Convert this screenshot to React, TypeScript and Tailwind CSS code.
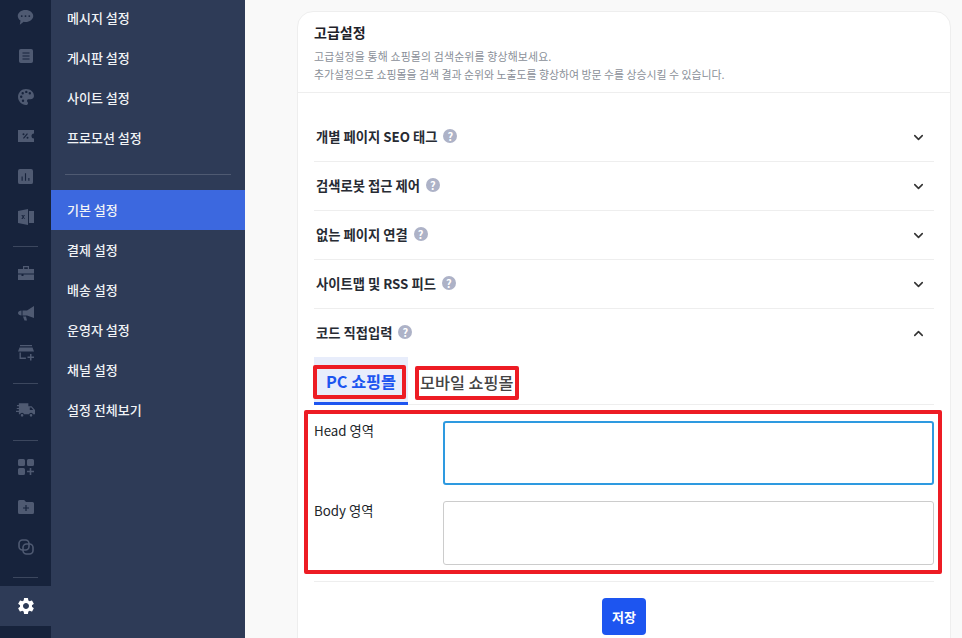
import { ChevronDown, ChevronUp } from 'lucide-react';
import { MdSettings } from 'react-icons/md';

const railGroups = [
  [
    <svg key="chat" viewBox="0 0 18 18" className="w-[17px] h-[17px] translate-y-px" fill="currentColor"><path d="M9 1C4.4 1 .8 3.8.8 7.4c0 2 1.1 3.7 2.9 4.9L3 16.600l4.100-3c.6.1 1.300.2 1.900.2 4.600 0 8.200-2.900 8.200-6.400S13.600 1 9 1zM5 8.500a1 1 0 110-2 1 1 0 010 2zm4 0a1 1 0 110-2 1 1 0 010 2zm4 0a1 1 0 110-2 1 1 0 010 2z" fillRule="evenodd" /></svg>,
    <svg key="doc" viewBox="0 0 16 16" className="w-[14px] h-4" fill="currentColor"><path fillRule="evenodd" d="M2 0h12a2 2 0 012 2v12a2 2 0 01-2 2H2a2 2 0 01-2-2V2a2 2 0 012-2zm2 4v1.200h8V4H4zm0 3.400v1.200h8V7.400H4zm0 3.400V12h8v-1.200H4z" /></svg>,
    <svg key="palette" viewBox="0 0 16 16" className="w-4 h-4 translate-y-px" fill="currentColor"><path fillRule="evenodd" d="M8 0C3.600 0 0 3.400 0 7.800 0 12.300 3.600 16 8 16c1.300 0 2-.8 2-1.800 0-.5-.2-.9-.5-1.300-.3-.4-.5-.7-.5-1.200 0-.9.7-1.500 1.600-1.500h1.900c2.100 0 3.500-1.400 3.500-3.300C16 2.800 12.400 0 8 0zM3.200 9a1.200 1.200 0 110-2.400 1.200 1.200 0 010 2.400zm1.500-3.600a1.200 1.200 0 110-2.400 1.200 1.200 0 010 2.400zm3.600-1.300a1.200 1.200 0 110-2.400 1.200 1.200 0 010 2.400zm3.500 1.300a1.200 1.200 0 110-2.400 1.200 1.200 0 010 2.400zM5 13a1.200 1.200 0 110-2.400A1.200 1.200 0 015 13z" /></svg>,
    <svg key="coupon" viewBox="0 0 16 12" className="w-4 h-3" fill="currentColor"><path fillRule="evenodd" d="M0 0h16v3.500a2.500 2.500 0 000 5V12H0V0zm9 3.300L5 8l.9.700 4-4.700L9 3.300zM5.500 5.300a1 1 0 100-2 1 1 0 000 2zm4 3.400a1 1 0 100-2 1 1 0 000 2z" /></svg>,
    <svg key="chart" viewBox="0 0 16 16" className="w-[15px] h-[15px]" fill="currentColor"><path fillRule="evenodd" d="M2 0h12a2 2 0 012 2v12a2 2 0 01-2 2H2a2 2 0 01-2-2V2a2 2 0 012-2zm1.800 8v4.500H5V8H3.800zm3.600-3.500v8h1.200v-8H7.400zM11 9.500v3h1.200v-3H11z" /></svg>,
    <svg key="excel" viewBox="0 0 16 16" className="w-4 h-4 translate-y-px" fill="currentColor"><path fillRule="evenodd" d="M0 2l10-2v16L0 14V2zm3.300 4l1.400 2-1.400 2h1.300l.8-1.200.8 1.200H7L5.600 8 7 6H5.800l-.7 1.100L4.500 6H3.300zM11 2h5v12h-5V2z" /></svg>,
  ],
  [
    <svg key="bag" viewBox="0 0 16 14" className="w-4 h-[14px]" fill="currentColor"><path fillRule="evenodd" d="M5 0h6v3h5v4.500H0V3h5V0zm1.200 1.200V3h3.600V1.200H6.200zM0 8.500h3.500V10h2V8.500H16V14H0V8.500z" /></svg>,
    <svg key="megaphone" viewBox="0 0 16 16" className="w-4 h-4" fill="currentColor"><path d="M16 1v12L9 10.500H4.500V5.500H9L16 1zM3.500 5.500v5C1.500 10.500 0 9.500 0 8s1.500-2.500 3.500-2.500zM5 11.500h3L9 15.500H6.500L5 11.500z" /></svg>,
    <svg key="store" viewBox="0 0 16 16" className="w-4 h-4" fill="currentColor"><path fillRule="evenodd" d="M2 0h12v1.200H2V0zM1.500 2.400h13L16 6.500H0l1.500-4.100zM1.500 7.500h1.400v5h5v1.500H1.500V7.500zM12 9h1.500v2.500H16V13h-2.500v2.500H12V13H9.500v-1.500H12V9z" /></svg>,
  ],
  [
    <svg key="truck" viewBox="0 0 20 14" className="w-[19px] h-[14px]" fill="currentColor"><path fillRule="evenodd" d="M3 0h10v3h3.500L20 7v4.500h-2a2.200 2.200 0 00-4.300 0H8.500a2.200 2.200 0 00-4.300 0H3V9H0V7.800h3V6H.8V4.800H3V3H1V1.800h2V0zm11.500 4.400V7h3.600l-2-2.600h-1.600zM6.400 14a1.400 1.400 0 110-2.800 1.400 1.400 0 010 2.800zm9.400 0a1.400 1.400 0 110-2.800 1.400 1.400 0 010 2.800z" /></svg>,
  ],
  [
    <svg key="apps" viewBox="0 0 16 16" className="w-4 h-4" fill="currentColor"><path d="M1.500 0h4A1.500 1.500 0 017 1.500v4A1.500 1.500 0 015.500 7h-4A1.500 1.500 0 010 5.500v-4A1.500 1.500 0 011.500 0zm9 0h4A1.500 1.500 0 0116 1.500v4A1.500 1.500 0 0114.500 7h-4A1.500 1.500 0 019 5.500v-4A1.500 1.500 0 0110.500 0zm-9 9h4A1.500 1.500 0 017 10.500v4A1.500 1.500 0 015.500 16h-4A1.500 1.500 0 010 14.500v-4A1.500 1.500 0 011.500 9zM11.700 9h1.600v2.700H16v1.600h-2.700V16h-1.600v-2.700H9v-1.600h2.700V9z" /></svg>,
    <svg key="folder" viewBox="0 0 16 14" className="w-4 h-[14px]" fill="currentColor"><path fillRule="evenodd" d="M1.500 0h4.700L8 2h6.500A1.500 1.500 0 0116 3.500v9a1.500 1.500 0 01-1.500 1.500h-13A1.500 1.500 0 010 12.500v-11A1.500 1.500 0 011.500 0zm5.900 5v2.400H5v1.200h2.400V11h1.200V8.600H11V7.400H8.600V5H7.400z" /></svg>,
    <svg key="copy" viewBox="0 0 16 16" className="w-4 h-4" fill="none" stroke="currentColor" strokeWidth="1.600"><rect x="1" y="1" width="10" height="10" rx="3.500" /><rect x="5" y="5" width="10" height="10" rx="3.500" /></svg>,
  ],
];

const topMenu = ['메시지 설정', '게시판 설정', '사이트 설정', '프로모션 설정'];
const bottomMenu = ['기본 설정', '결제 설정', '배송 설정', '운영자 설정', '채널 설정', '설정 전체보기'];
const accordions = ['개별 페이지 SEO 태그', '검색로봇 접근 제어', '없는 페이지 연결', '사이트맵 및 RSS 피드'];

function Help() {
  return (
    <span className="ml-[6px] -translate-y-px w-[14px] h-[14px] rounded-full bg-[#adb2c7] text-white text-[11px] font-bold leading-[14px] text-center inline-block">?</span>
  );
}

export default function App() {
  return (
    <div className="h-[638px] w-[962px] overflow-hidden flex bg-[#f9f9f9] text-[#212529]" style={{ fontFamily: '"Noto Sans CJK KR", "Noto Sans", sans-serif' }}>
      {/* Icon rail */}
      <aside className="w-[51px] shrink-0 bg-[#17233c] flex flex-col text-[#4f5a72]">
        <div className="-mt-[4px]">
          {railGroups.map((group, i) => (
            <div key={i}>
              {group.map((icon, j) => (
                <div key={j} className="h-[40px] flex items-center justify-center">{icon}</div>
              ))}
              <div className={`mx-[13px] mt-[10px] h-px bg-[#3c475e] ${i < railGroups.length - 1 ? 'mb-[6px]' : ''}`} />
            </div>
          ))}
          <div className="mt-[8px] h-[40px] bg-[#2e3b57] flex items-center justify-center text-white">
            <MdSettings size={20} />
          </div>
        </div>
      </aside>

      {/* Settings menu */}
      <nav className="w-[194px] shrink-0 bg-[#2e3b57] text-[#f1f3f6] text-[13px] font-medium">
        <div className="-mt-[2px]">
          {topMenu.map((label) => (
            <div key={label} className="h-[40px] pl-[16px] flex items-center">{label}</div>
          ))}
        </div>
        <div className="mx-[14px] mt-[16px] mb-[15px] h-px bg-[#4f5a72]" />
        {bottomMenu.map((label, i) => (
          <div key={label} className={`h-[40px] pl-[16px] flex items-center ${i === 0 ? 'bg-[#3c68df]' : ''}`}>{label}</div>
        ))}
      </nav>

      {/* Content */}
      <main className="flex-1 pl-[52px] pr-[11px] pt-[11px]">
        <section className="relative bg-white border border-[#eeeeee] rounded-[16px] h-[700px]">
          <header className="h-[81px] border-b border-[#eeeeee] pl-[16px] pt-[10px]">
            <h2 className="text-[14px] font-bold leading-[20px] text-[#1e2229]">고급설정</h2>
            <p className="mt-[5px] text-[10.900px] leading-[18px] text-[#8a8f98]">
              <span className="tracking-[0.16px]">고급설정을 통해 쇼핑몰의 검색순위를 향상해보세요.</span>
              <br />
              추가설정으로 쇼핑몰을 검색 결과 순위와 노출도를 향상하여 방문 수를 상승시킬 수 있습니다.
            </p>
          </header>

          <div className="px-[16px] pt-[20px]">
            {accordions.map((label) => (
              <div key={label} className="h-[49px] border-b border-[#eeeeee] flex items-center justify-between pl-[2px] pr-[8px]">
                <span className="flex items-center text-[13.300px] font-bold text-[#272b33]">{label}<Help /></span>
                <ChevronDown size={15} strokeWidth={2.500} className="text-[#333]" />
              </div>
            ))}
            <div className="h-[48px] flex items-center justify-between pl-[2px] pr-[8px]">
              <span className="flex items-center text-[13.300px] font-bold text-[#272b33]">코드 직접입력<Help /></span>
              <ChevronUp size={15} strokeWidth={2.500} className="text-[#333]" />
            </div>

            {/* Tabs */}
            <div className="flex border-b border-[#eeeeee] h-[48px]">
              <div className="w-[94px] h-[48px] pt-[3px] bg-[#e8edfb] border-b-[3px] border-[#1d55f0] text-[#1d55f0] text-[16.300px] font-bold flex items-center justify-center">PC 쇼핑몰</div>
              <div className="ml-[12px] h-[48px] pt-[2px] text-[16.300px] font-medium text-[#444] flex items-center">모바일 쇼핑몰</div>
            </div>

            {/* Code fields */}
            <div className="pt-[16px] pb-[16px] border-b border-[#eeeeee]">
              <div className="flex h-[64px]">
                <label className="w-[129px] text-[13.300px] pt-[1px] leading-[18px]">Head 영역</label>
                <textarea className="flex-1 resize-none rounded-[3px] border-2 border-[#2e9ae0] bg-white outline-none" />
              </div>
              <div className="flex h-[64px] mt-[16px]">
                <label className="w-[129px] text-[13.300px] pt-[1px] leading-[18px]">Body 영역</label>
                <textarea className="flex-1 resize-none rounded-[3px] border border-[#cccccc] bg-white outline-none" />
              </div>
            </div>

            <div className="flex justify-center pt-[16px]">
              <button className="w-[44px] h-[37px] rounded-[4px] bg-[#1d55f0] text-white text-[13px] font-bold">저장</button>
            </div>
          </div>

          {/* Red annotation boxes */}
          <div className="absolute left-[15px] top-[353px] w-[93px] h-[34px] border-[4px] border-[#ed1c24] rounded-[2px]" />
          <div className="absolute left-[117px] top-[354px] w-[104px] h-[34px] border-[4px] border-[#ed1c24] rounded-[2px]" />
          <div className="absolute left-[6px] top-[398px] w-[638px] h-[164px] border-[4px] border-[#ed1c24] rounded-[2px]" />
        </section>
      </main>
    </div>
  );
}
